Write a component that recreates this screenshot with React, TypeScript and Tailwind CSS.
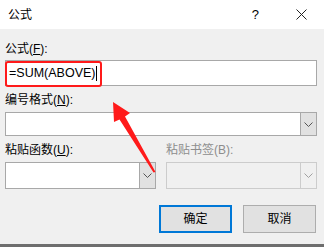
import React from 'react'

const font = { fontFamily: '"Liberation Sans", "Noto Sans CJK SC", sans-serif' }

function Chevron({ color = '#555' }: { color?: string }) {
  return (
    <svg width="9" height="5" viewBox="0 0 9 5" fill="none">
      <path d="M0.5 0.5 L4.5 4.5 L8.5 0.5" stroke={color} strokeWidth="1" />
    </svg>
  )
}

function Select({ className, disabled }: { className: string; disabled?: boolean }) {
  return (
    <div
      className={`flex border ${disabled ? 'border-[#cccccc] bg-[#f0f0f0]' : 'border-[#a8a8a8] bg-white'} ${className}`}
    >
      <div className="flex-1" />
      <div
        className={`w-[16px] flex items-center justify-center border-l ${
          disabled ? 'border-[#cccccc] bg-[#f0f0f0]' : 'border-[#a8a8a8] bg-[#e1e1e1]'
        }`}
      >
        <Chevron color={disabled ? '#a0a0a0' : '#555'} />
      </div>
    </div>
  )
}

export default function App() {
  return (
    <div className="relative w-[324px] h-[247px] overflow-hidden text-[12px] text-black" style={font}>
      {/* title bar */}
      <div className="h-[29px] bg-white flex items-center pl-[8px]">
        <span className="text-[12px] flex-1">公式</span>
        <span className="text-[13px] mr-[37px]">?</span>
        <svg width="11" height="11" viewBox="0 0 11 11" className="mr-[17px]">
          <path d="M0.5 0.5 L10.5 10.5 M10.5 0.5 L0.5 10.5" stroke="#222" strokeWidth="1" />
        </svg>
      </div>

      {/* body */}
      <div className="h-[218px] bg-[#f0f0f0] pl-[5px] pr-[7px] pt-[12px] flex flex-col">
        <div className="h-[16px] leading-[16px]">
          公式(<span className="underline">F</span>):
        </div>
        <div className="relative mt-[3px] h-[26px] border border-[#a8a8a8] bg-white flex items-center pl-[3px]">
          <span className="text-[12.5px]">=SUM(ABOVE)</span>
          <span className="ml-[1px] w-[1px] h-[15px] bg-black" />
          <div className="absolute left-[-1px] top-[0px] w-[97px] h-[26px] border-2 border-[#ff1a1a] rounded-[3px]" />
        </div>

        <div className="mt-[6px] h-[16px] leading-[16px]">
          编号格式(<span className="underline">N</span>):
        </div>
        <Select className="mt-[4px] h-[24px]" />

        <div className="mt-[6px] h-[16px] leading-[16px] flex">
          <span className="w-[161px]">
            粘贴函数(<span className="underline">U</span>):
          </span>
          <span className="text-[#8d8d8d]">粘贴书签(B):</span>
        </div>
        <div className="mt-[4px] flex gap-[10px]">
          <Select className="w-[151px] h-[27px]" />
          <Select className="flex-1 h-[27px]" disabled />
        </div>

        <div className="mt-[16px] flex justify-end gap-[11px] pr-[1px]">
          <button className="w-[73px] h-[28px] border-2 border-[#0078d7] bg-[#e1e1e1] text-[12px]">确定</button>
          <button className="w-[73px] h-[28px] border border-[#adadad] bg-[#e1e1e1] text-[12px]">取消</button>
        </div>
      </div>
      <div className="absolute left-0 bottom-0 w-full h-[3px] bg-[#6e6e6e]" />

      {/* red arrow overlay */}
      <svg className="absolute left-0 top-0" width="324" height="247" viewBox="0 0 324 247">
        <polygon
          points="113,102 130,113 125,116.5 155.5,172 153.5,172.5 119.5,119.5 114,122"
          fill="#ff1a1a"
        />
      </svg>
    </div>
  )
}
